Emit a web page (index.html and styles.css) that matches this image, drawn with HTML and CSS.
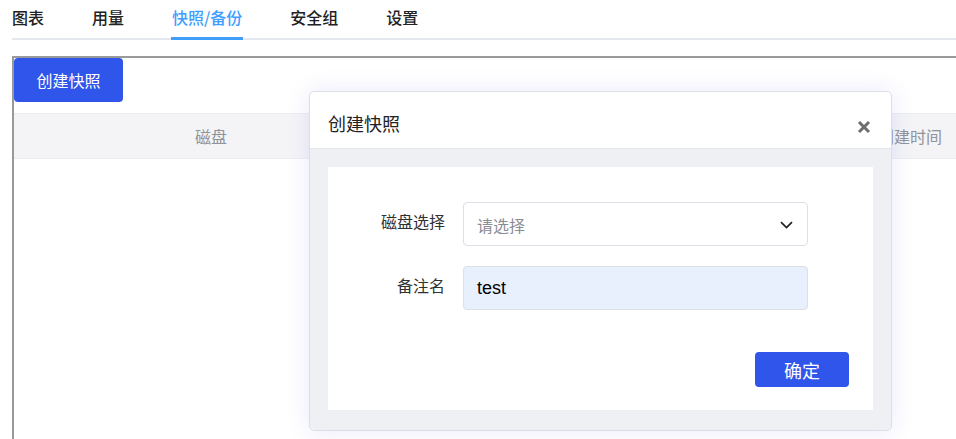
FILE: index.html
```html
<!DOCTYPE html>
<html lang="zh-CN">
<head>
<meta charset="utf-8">
<title>创建快照</title>
<link rel="stylesheet" href="styles.css">
</head>
<body>
<div class="page">
  <nav class="tabs">
    <span class="tab">图表</span>
    <span class="tab">用量</span>
    <span class="tab active">快照/备份</span>
    <span class="tab">安全组</span>
    <span class="tab">设置</span>
  </nav>
  <div class="panel">
    <button class="btn-primary create">创建快照</button>
    <div class="thead">
      <div class="th th-disk">磁盘</div>
      <div class="th-spacer"></div>
      <div class="th th-time">创建时间</div>
    </div>
  </div>
</div>

<div class="modal">
  <div class="modal-header">
    <span class="modal-title">创建快照</span>
    <svg class="modal-close" width="14" height="14" viewBox="0 0 14 14"><path d="M2 2 L12 12 M12 2 L2 12" stroke="#6e6e6e" stroke-width="3" stroke-linecap="butt"/></svg>
  </div>
  <div class="modal-body">
    <div class="card">
      <div class="form-row">
        <label class="form-label">磁盘选择</label>
        <div class="select">
          <span class="placeholder">请选择</span>
          <svg class="chevron" width="13" height="8" viewBox="0 0 13 8"><path d="M1 1.2 L6.5 6.6 L12 1.2" fill="none" stroke="#222" stroke-width="1.7"/></svg>
        </div>
      </div>
      <div class="form-row">
        <label class="form-label">备注名</label>
        <div class="input">test</div>
      </div>
      <div class="form-actions">
        <button class="btn-primary confirm">确定</button>
      </div>
    </div>
  </div>
</div>
</body>
</html>
```

FILE: styles.css
```css
html, body {
  margin: 0;
  padding: 0;
  background: #fff;
  overflow: hidden;
  width: 956px;
  height: 439px;
}
body {
  font-family: "Noto Sans CJK SC", "Noto Sans", "Liberation Sans", sans-serif;
  color: #303133;
  position: relative;
}
.page {
  padding-left: 12px;
}
.tabs {
  display: flex;
  gap: 48px;
  height: 38px;
  border-bottom: 2px solid #e4e7ed;
}
.tab {
  font-size: 16px;
  font-weight: 500;
  line-height: 34px;
  height: 37px;
  box-sizing: border-box;
  color: #222;
  position: relative;
}
.tab.active {
  color: #409eff;
}
.tab.active::after {
  content: "";
  position: absolute;
  left: -1px;
  right: -1px;
  bottom: -3px;
  height: 3px;
  background: #409eff;
}
.panel {
  margin-top: 16px;
  height: 400px;
  border-top: 2px solid #999;
  border-left: 2px solid #999;
}
.btn-primary {
  background: #2f55ea;
  color: #fff;
  border: none;
  border-radius: 4px;
  font-family: inherit;
  cursor: pointer;
  padding: 0;
}
.create {
  display: block;
  width: 109px;
  height: 44px;
  font-size: 16px;
}
.thead {
  display: flex;
  margin-top: 11px;
  height: 46px;
  background: #f4f4f7;
  border-top: 1px solid #ebedf2;
  border-bottom: 1px solid #ebedf2;
  box-sizing: border-box;
  align-items: center;
}
.th {
  font-size: 16px;
  color: #909399;
}
.th-disk {
  width: 394px;
  text-align: center;
}
.th-spacer {
  flex: 1;
}
.th-time {
  margin-right: 14px;
}
.modal {
  position: absolute;
  left: 309px;
  top: 91px;
  width: 583px;
  height: 340px;
  box-sizing: border-box;
  border: 1px solid #dcdfe6;
  border-radius: 5px;
  background: #fff;
  box-shadow: 0 0 22px rgba(110, 110, 230, 0.16);
  display: flex;
  flex-direction: column;
  overflow: hidden;
}
.modal-header {
  height: 57px;
  flex: none;
  display: flex;
  align-items: center;
  justify-content: space-between;
  padding: 6px 20px 0 18px;
  box-sizing: border-box;
  border-bottom: 1px solid #e4e6ec;
}
.modal-title {
  font-size: 18px;
  color: #222;
}
.modal-close {
  margin-top: 8px;
}
.modal-body {
  flex: 1;
  background: #eef0f4;
  padding: 18px;
}
.card {
  background: #fff;
  height: 243px;
  padding-top: 35px;
  box-sizing: border-box;
  display: flex;
  flex-direction: column;
  gap: 20px;
}
.form-row {
  display: flex;
  align-items: flex-start;
  gap: 18px;
}
.form-label {
  width: 117px;
  text-align: right;
  font-size: 16px;
  line-height: 38px;
  color: #303133;
}
.select, .input {
  width: 345px;
  height: 44px;
  box-sizing: border-box;
  border: 1px solid #dcdfe6;
  border-radius: 4px;
  display: flex;
  align-items: center;
  padding: 0 14px 0 13px;
}
.select {
  justify-content: space-between;
  background: #fff;
}
.placeholder {
  font-size: 16px;
  color: #8a8d93;
  padding-top: 2px;
}
.chevron {
  margin-top: 2px;
}
.input {
  background: #e8f0fe;
  font-family: "Liberation Sans", Arial, sans-serif;
  font-size: 18px;
  color: #000;
}
.form-actions {
  display: flex;
  justify-content: flex-end;
  padding-right: 24px;
  margin-top: 22px;
}
.confirm {
  width: 94px;
  height: 35px;
  font-size: 18px;
}
```
